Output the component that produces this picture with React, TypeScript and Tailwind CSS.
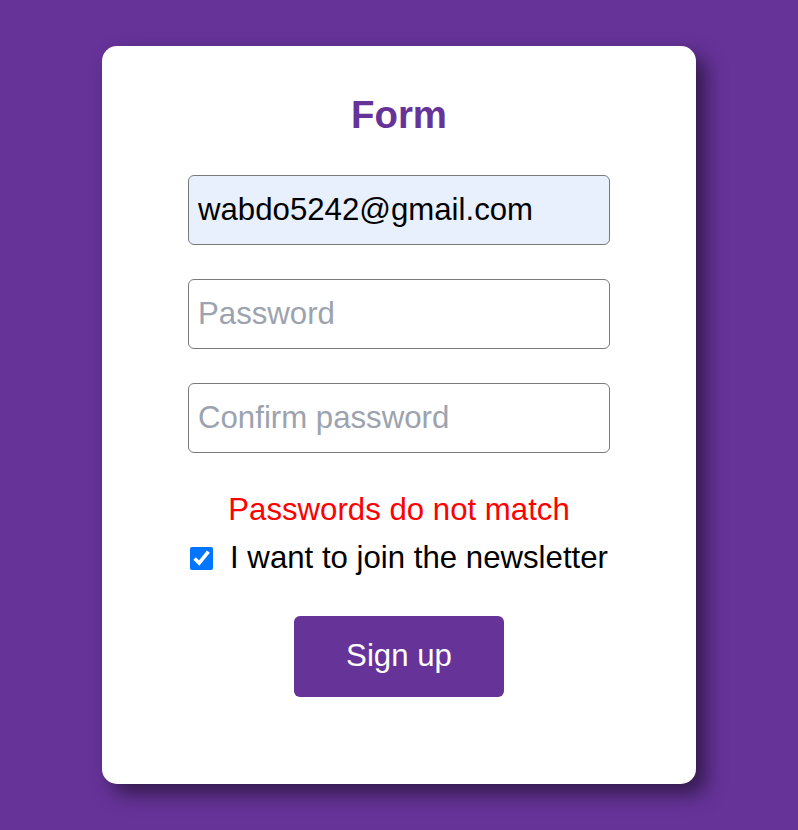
import React, { useState } from 'react';

const font = { fontFamily: '"Liberation Sans", Arial, sans-serif' };

const App = () => {
  const [email, setEmail] = useState('wabdo5242@gmail.com');
  const [password, setPassword] = useState('');
  const [confirm, setConfirm] = useState('');
  const [newsletter, setNewsletter] = useState(true);

  return (
    <div className="min-h-screen w-full bg-[#663399] pt-[46px] pb-[46px]" style={font}>
      <div className="mx-auto flex h-[738px] w-[594px] flex-col items-center rounded-[15px] bg-white pt-[47px] shadow-[10px_10px_20px_rgba(0,0,0,0.5)]">
        <h1 className="mb-[38px] text-[38.4px] font-bold leading-[44px] text-[#663399]">
          Form
        </h1>

        <input
          type="email"
          value={email}
          onChange={(e) => setEmail(e.target.value)}
          className="h-[70px] w-[422px] rounded-[6px] border border-[#7a7a7a] bg-[#e8f0fe] px-[9px] text-[31.2px] text-black outline-none"
        />
        <input
          type="password"
          placeholder="Password"
          value={password}
          onChange={(e) => setPassword(e.target.value)}
          className="mt-[34px] h-[70px] w-[422px] rounded-[6px] border border-[#7a7a7a] bg-white px-[9px] text-[31.2px] text-black outline-none placeholder:text-[#9ca3af]"
        />
        <input
          type="password"
          placeholder="Confirm password"
          value={confirm}
          onChange={(e) => setConfirm(e.target.value)}
          className="mt-[34px] h-[70px] w-[422px] rounded-[6px] border border-[#7a7a7a] bg-white px-[9px] text-[31.2px] text-black outline-none placeholder:text-[#9ca3af]"
        />

        <p className="mt-[39px] text-[31.2px] leading-[36px] text-[#ff0000]">
          Passwords do not match
        </p>

        <label className="mt-[12px] flex items-center gap-[17px] text-[31.2px] leading-[36px] text-black">
          <input
            type="checkbox"
            checked={newsletter}
            onChange={(e) => setNewsletter(e.target.checked)}
            className="m-0 h-[23px] w-[23px] accent-[#0075ff]"
          />
          I want to join the newsletter
        </label>

        <button className="mt-[40px] h-[81px] w-[210px] rounded-[6px] bg-[#663399] text-[31.2px] text-white">
          Sign up
        </button>
      </div>
    </div>
  );
};

export default App;
